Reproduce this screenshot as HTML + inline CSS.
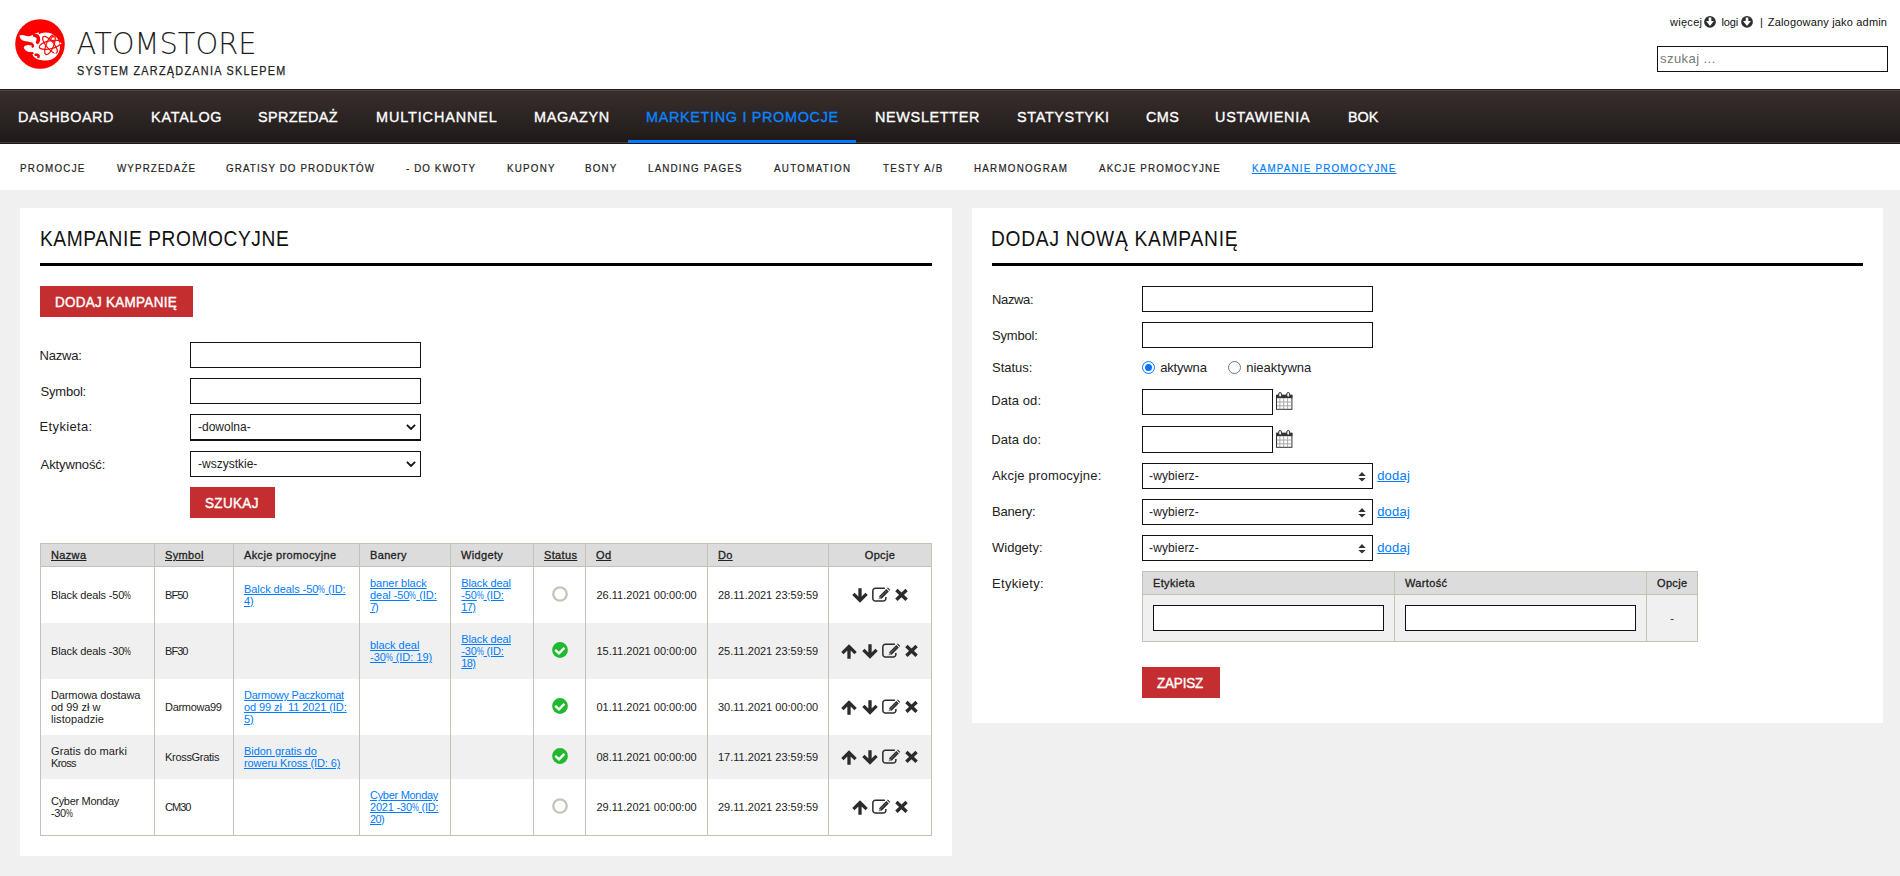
<!DOCTYPE html>
<html lang="pl">
<head>
<meta charset="utf-8">
<title>AtomStore - Kampanie promocyjne</title>
<style>
*{box-sizing:border-box;margin:0;padding:0}
html,body{width:1900px;height:876px;overflow:hidden}
body{background:#f0f0f0;font-family:"Liberation Sans",sans-serif;font-size:12px;color:#222;position:relative}
a{color:#007bff;text-decoration:underline}
.abs{position:absolute}
/* header */
#header{position:absolute;left:0;top:0;width:1900px;height:89px;background:#fff}
#logo-circle{position:absolute;left:14.8px;top:18.5px;width:50px;height:50px}
#brand{position:absolute;left:76px;top:24px;width:182px;height:34px}
#tagline{-webkit-text-stroke:.25px currentColor;transform:scaleX(.9);transform-origin:0 50%;position:absolute;left:77px;top:64px;font-size:12px;letter-spacing:1px;color:#222;white-space:nowrap;line-height:14px}
#toplinks span{position:absolute;top:15px;font-size:11px;line-height:14px;color:#111;white-space:nowrap}
#toplinks i{position:absolute;top:16px;width:12px;height:12px}
#toplinks i svg{display:block}
#tl3{color:#555}
#search{position:absolute;left:1657px;top:46px;width:231px;height:26px;border:1px solid #111;background:#fff;font-size:13px;color:#777;line-height:24px;padding-left:2px}
/* nav */
#nav{position:absolute;left:0;top:89px;width:1900px;height:55px;background:linear-gradient(#392f2d,#1e1a19);border-top:1px solid #241e1d;border-bottom:1px solid #1d1817;box-shadow:inset 0 1px 0 #4b4443,inset 0 -1px 0 #423b3a}
#nav span{-webkit-text-stroke:.35px currentColor;transform:scaleX(.93);transform-origin:0 50%;position:absolute;top:0;height:53px;line-height:53px;font-size:15.5px;color:#fff;white-space:nowrap;letter-spacing:.4px}
#nav span.act{color:#0a84ff}
#nav i{position:absolute;left:628px;top:50px;width:228px;height:3px;background:#007bff}
#subnav{position:absolute;left:0;top:144px;width:1900px;height:46px;background:#fff}
#subnav span{-webkit-text-stroke:.2px currentColor;transform:scaleX(.89);transform-origin:0 50%;position:absolute;top:17px;line-height:14px;font-size:11px;letter-spacing:1px;color:#222;white-space:nowrap}
#subnav span.act{color:#007bff;text-decoration:underline}
/* panels */
.panel{position:absolute;background:#fff}
#left{left:20px;top:208px;width:932px;height:648px}
#right{left:972px;top:208px;width:911px;height:515px}
.panel h1{transform:scaleX(.88);transform-origin:0 50%;position:absolute;left:20px;top:19px;font-size:21.8px;font-weight:normal;color:#111;line-height:24px;letter-spacing:.6px;white-space:nowrap}
.panel .rule{position:absolute;left:20px;right:20px;top:55px;height:3px;background:#000}
.btn{position:absolute;background:#c52e31;height:31px}
.btn span{transform:scaleX(.93);transform-origin:0 50%;position:absolute;top:0;color:#fff;font-size:14.5px;letter-spacing:.6px;line-height:33px;white-space:nowrap;-webkit-text-stroke:.4px #fff}
.lbl{position:absolute;font-size:13px;line-height:16px;color:#222;white-space:nowrap}
.inp{position:absolute;height:26px;border:1px solid #111;background:#fff}
.sel{position:absolute;height:26px;border:1px solid #111;background:#fff;font-size:12px;line-height:24px;padding-left:6px;color:#222}
/* table */
table{border-collapse:separate;border-spacing:0;position:absolute;font-size:11px;line-height:12px;color:#222;table-layout:fixed}
th{background:#dcdcdc;font-weight:normal;-webkit-text-stroke:.3px currentColor;letter-spacing:.35px;text-align:left;padding:0 10px;height:24px;border:1px solid #c3c3b4;border-right:0;font-size:11px;white-space:nowrap}
td{white-space:nowrap;letter-spacing:-.12px;padding:0 10px;border-left:1px solid #c3c3b4;vertical-align:middle}
th:last-child,td:last-child{border-right:1px solid #c3c3b4}
tr:last-child td{border-bottom:1px solid #c3c3b4}
tr.alt td{background:#f0f0f0}
th u{text-decoration:underline}
td.dt{letter-spacing:0}
td.sy{letter-spacing:-.3px}
.pc{display:inline-block;transform:scaleX(.7);transform-origin:0 50%;margin-right:-3px;text-decoration:inherit;letter-spacing:0}
.ops{text-align:center;padding:0;white-space:nowrap;font-size:0}
td.ops{padding:0}
.ic{display:inline-block;vertical-align:middle;margin:0 2.3px;overflow:visible;position:relative;left:-.4px;top:.2px}
.stc{text-align:center;padding:0;font-size:0}
td.stc{padding:0}
.st{display:inline-block;vertical-align:middle;position:relative;top:-1px;left:.5px}
.sel{position:absolute}
.sel svg{position:absolute}
.sel span,#search span{display:inline-block}
.chev{right:4px;top:9px}
.updn{right:6px;top:7px}
.radio{position:absolute;width:13px;height:13px;border-radius:50%;border:1px solid #767676;background:#fff}
.radio.on{border-color:#0075ff}
.radio.on::after{content:"";position:absolute;left:2px;top:2px;width:7px;height:7px;border-radius:50%;background:#0075ff}
.lnk{color:#007bff;text-decoration:underline}
.inp.rel{position:relative;display:block}
.cal{display:block}

#n1{letter-spacing:0.54px!important;margin-left:0.00px!important}
#n2{letter-spacing:0.83px!important;margin-left:0.00px!important}
#n3{letter-spacing:0.40px!important;margin-left:0.00px!important}
#n4{letter-spacing:0.95px!important;margin-left:0.00px!important}
#n5{letter-spacing:0.69px!important;margin-left:0.00px!important}
#n6{letter-spacing:0.72px!important;margin-left:0.00px!important}
#n7{letter-spacing:0.71px!important;margin-left:0.00px!important}
#n8{letter-spacing:0.71px!important;margin-left:0.00px!important}
#n9{letter-spacing:0.40px!important;margin-left:0.00px!important}
#n10{letter-spacing:0.77px!important;margin-left:0.00px!important}
#n11{letter-spacing:-0.10px!important;margin-left:1.00px!important}
#n12{letter-spacing:1.43px!important;margin-left:0.00px!important}
#n13{letter-spacing:1.26px!important;margin-left:1.00px!important}
#n14{letter-spacing:1.25px!important;margin-left:0.00px!important}
#n15{letter-spacing:1.23px!important;margin-left:0.00px!important}
#n16{letter-spacing:1.40px!important;margin-left:0.00px!important}
#n17{letter-spacing:1.35px!important;margin-left:-1.00px!important}
#n18{letter-spacing:1.33px!important;margin-left:0.00px!important}
#n19{letter-spacing:1.45px!important;margin-left:0.00px!important}
#n20{letter-spacing:1.38px!important;margin-left:2.00px!important}
#n21{letter-spacing:1.40px!important;margin-left:0.00px!important}
#n22{letter-spacing:1.30px!important;margin-left:1.00px!important}
#n23{letter-spacing:1.35px!important;margin-left:0.00px!important}
#tagline{letter-spacing:1.44px!important;margin-left:0.40px!important}
#tl4{letter-spacing:0.18px!important;margin-left:0.80px!important}
#h1l{letter-spacing:0.65px!important;margin-left:-0.40px!important}
#h1r{letter-spacing:0.85px!important;margin-left:-1.00px!important}
#b1{letter-spacing:0.29px!important;margin-left:-0.20px!important}
#b2{letter-spacing:0.36px!important;margin-left:-0.20px!important}
#b3{letter-spacing:-0.20px!important;margin-left:1.00px!important}
#tl1{letter-spacing:0.28px!important;margin-left:1.00px!important}
#tl2{letter-spacing:-0.14px!important;margin-left:0.40px!important}
#ll1{letter-spacing:-0.24px!important;margin-left:-0.40px!important}
#ll2{letter-spacing:-0.22px!important;margin-left:0.60px!important}
#ll3{letter-spacing:0.33px!important;margin-left:-0.40px!important}
#ll4{letter-spacing:-0.11px!important;margin-left:0.60px!important}
#lr1{letter-spacing:-0.36px!important;margin-left:0.00px!important}
#lr2{letter-spacing:-0.17px!important;margin-left:0.00px!important}
#lr3{letter-spacing:0.00px!important;margin-left:0.00px!important}
#lr4{letter-spacing:-0.17px!important;margin-left:1.20px!important}
#lr5{letter-spacing:0.00px!important;margin-left:0.20px!important}
#lr6{letter-spacing:0.10px!important;margin-left:-0.80px!important}
#lr7{letter-spacing:0.10px!important;margin-left:-0.80px!important}
#lr8{letter-spacing:0.19px!important;margin-left:0.00px!important}
#lr10{letter-spacing:-0.18px!important;margin-left:0.00px!important}
#lr12{letter-spacing:0.00px!important;margin-left:0.00px!important}
#lr14{letter-spacing:0.31px!important;margin-left:0.00px!important}
#lr9{letter-spacing:0.19px!important;margin-left:-0.80px!important}
#lr11{letter-spacing:0.19px!important;margin-left:-0.80px!important}
#lr13{letter-spacing:0.19px!important;margin-left:-0.80px!important}
#s1{letter-spacing:0.00px!important;margin-left:1.00px!important}
#s2{letter-spacing:0.00px!important;margin-left:1.00px!important}
#s3{letter-spacing:0.13px!important;margin-left:0.00px!important}
#s4{letter-spacing:0.13px!important;margin-left:0.00px!important}
#s5{letter-spacing:0.13px!important;margin-left:0.00px!important}
#sp{letter-spacing:0.44px!important;margin-left:0.00px!important}
#c1{letter-spacing:-0.13px!important;margin-left:0.00px!important}
#c2{letter-spacing:-0.96px!important;margin-left:0.00px!important}
#c3{letter-spacing:-0.06px!important;margin-left:0.00px!important}
#c4{letter-spacing:-0.12px!important;margin-left:0.00px!important}
#c5{letter-spacing:-0.02px!important;margin-left:0.00px!important}
#c6{letter-spacing:-0.04px!important;margin-left:0.00px!important}
#c7{letter-spacing:-1.12px!important;margin-left:0.00px!important}
#c8{letter-spacing:-0.12px!important;margin-left:0.30px!important}
#c9{letter-spacing:-0.12px!important;margin-left:0.30px!important}
#c10{letter-spacing:-0.62px!important;margin-left:0.30px!important}
#c11{letter-spacing:0.00px!important;margin-left:0.50px!important}
#c12{letter-spacing:0.00px!important;margin-left:0.00px!important}
#c13{letter-spacing:-0.13px!important;margin-left:0.00px!important}
#c14{letter-spacing:-0.96px!important;margin-left:0.00px!important}
#c15{letter-spacing:-0.02px!important;margin-left:0.00px!important}
#c16{letter-spacing:-0.02px!important;margin-left:0.00px!important}
#c17{letter-spacing:-0.12px!important;margin-left:0.30px!important}
#c18{letter-spacing:-0.12px!important;margin-left:0.30px!important}
#c19{letter-spacing:-0.62px!important;margin-left:0.30px!important}
#c20{letter-spacing:0.00px!important;margin-left:0.50px!important}
#c21{letter-spacing:0.00px!important;margin-left:0.00px!important}
#c22{letter-spacing:-0.12px!important;margin-left:0.00px!important}
#c23{letter-spacing:-0.02px!important;margin-left:0.00px!important}
#c24{letter-spacing:0.10px!important;margin-left:0.00px!important}
#c25{letter-spacing:-0.30px!important;margin-left:0.00px!important}
#c26{letter-spacing:-0.24px!important;margin-left:0.00px!important}
#c27{letter-spacing:-0.08px!important;margin-left:0.00px!important}
#c28{letter-spacing:-0.12px!important;margin-left:0.00px!important}
#c29{letter-spacing:0.00px!important;margin-left:0.50px!important}
#c30{letter-spacing:0.00px!important;margin-left:0.00px!important}
#c31{letter-spacing:0.09px!important;margin-left:0.00px!important}
#c32{letter-spacing:-0.63px!important;margin-left:0.00px!important}
#c33{letter-spacing:-0.30px!important;margin-left:0.00px!important}
#c34{letter-spacing:-0.04px!important;margin-left:0.00px!important}
#c35{letter-spacing:-0.11px!important;margin-left:0.00px!important}
#c36{letter-spacing:0.00px!important;margin-left:0.50px!important}
#c37{letter-spacing:0.00px!important;margin-left:0.00px!important}
#c38{letter-spacing:-0.30px!important;margin-left:0.00px!important}
#c39{letter-spacing:-0.45px!important;margin-left:0.00px!important}
#c40{letter-spacing:-0.98px!important;margin-left:0.00px!important}
#c41{letter-spacing:-0.29px!important;margin-left:0.00px!important}
#c42{letter-spacing:-0.20px!important;margin-left:0.00px!important}
#c43{letter-spacing:-0.62px!important;margin-left:0.00px!important}
#c44{letter-spacing:0.00px!important;margin-left:0.50px!important}
#c45{letter-spacing:0.00px!important;margin-left:0.00px!important}
</style>
</head>
<body>
<div id="header">
  <svg id="logo-circle" viewBox="0 0 50 50">
    <circle cx="25" cy="25" r="24.8" fill="#fe0000"/>
    <circle cx="31" cy="27.6" r="14" fill="#fff"/>
    <path fill="#fff" d="M4.4 16.6C7.5 14.6 11 18 15 17C18 16.2 19.5 13.8 24 13.4L23 24.5C18 24 13.5 22.2 9.2 21.9C6.6 21.6 4.8 19.6 4.4 16.6Z"/>
    <path fill="#fff" d="M8.8 28C10.8 25.4 15 26.6 20.5 24.8L21.5 33.4C17 33.3 13 33.2 11.3 31.7C9.8 30.6 8.8 29.6 8.8 28Z"/>
    <path fill="#fff" d="M17.6 35.3C19.4 33.8 22 35.2 24.4 33.8L29 41.4C24.5 41.3 20.2 39.8 18.6 37.6C17.9 36.7 17.5 36.1 17.6 35.3Z"/>
    <path fill="none" stroke="#fe0000" stroke-width="3.6" stroke-linecap="round" d="M19.6 16.2C23.4 16.6 24.4 19.8 22.6 23.2"/>
    <path fill="none" stroke="#fe0000" stroke-width="2.4" stroke-linecap="round" d="M15.2 25.2C17.6 24.8 18.6 26.4 17.6 27.6"/>
    <path fill="none" stroke="#fe0000" stroke-width="2.6" stroke-linecap="round" d="M20.6 35.8C23 35.4 24.2 36.6 23.4 38"/>
    <g fill="none" stroke="#fe0000" stroke-width="1.15">
      <ellipse cx="35" cy="25.8" rx="11" ry="4" transform="rotate(-12 35 25.8)"/>
      <ellipse cx="35" cy="25.8" rx="10.5" ry="3.8" transform="rotate(50 35 25.8)"/>
      <ellipse cx="35" cy="25.8" rx="10.5" ry="3.8" transform="rotate(-68 35 25.8)"/>
      <path d="M39.6 18.2A2.3 2.3 0 1 0 40 21.6"/>
    </g>
    <circle cx="40" cy="33.8" r=".9" fill="#fff"/>
    <circle cx="45.6" cy="24.4" r=".8" fill="#fff"/>
  </svg>
  <svg id="brand" viewBox="0 0 182 34"><text x="0.6" y="29.6" font-family="DejaVu Sans, Liberation Sans, sans-serif" font-weight="200" font-size="30" fill="#1d1d1d" textLength="180" lengthAdjust="spacingAndGlyphs">ATOMSTORE</text></svg>
  <div id="tagline">SYSTEM ZARZĄDZANIA SKLEPEM</div>
  <div id="toplinks"><span id="tl1" style="left:1669px">więcej</span><i style="left:1704px"><svg class="circ" width="12" height="12" viewBox="0 0 12 12"><circle cx="6" cy="5.9" r="5.9" fill="#2e2e2e"/><path d="M4.7 1.6h2.6v3.5h2.6L6 9.9 2.1 5.1h2.6z" fill="#fff"/></svg></i><span id="tl2" style="left:1721px">logi</span><i style="left:1741px"><svg class="circ" width="12" height="12" viewBox="0 0 12 12"><circle cx="6" cy="5.9" r="5.9" fill="#2e2e2e"/><path d="M4.7 1.6h2.6v3.5h2.6L6 9.9 2.1 5.1h2.6z" fill="#fff"/></svg></i><span id="tl3" style="left:1760px">|</span><span id="tl4" style="left:1767px">Zalogowany jako admin</span></div>
  <div id="search"><span id="sp">szukaj ...</span></div>
</div>
<div id="nav">
  <span id="n1" style="left:18px">DASHBOARD</span>
  <span id="n2" style="left:151px">KATALOG</span>
  <span id="n3" style="left:258px">SPRZEDAŻ</span>
  <span id="n4" style="left:376px">MULTICHANNEL</span>
  <span id="n5" style="left:534px">MAGAZYN</span>
  <span id="n6" style="left:646px" class="act">MARKETING I PROMOCJE</span>
  <span id="n7" style="left:875px">NEWSLETTER</span>
  <span id="n8" style="left:1017px">STATYSTYKI</span>
  <span id="n9" style="left:1146px">CMS</span>
  <span id="n10" style="left:1215px">USTAWIENIA</span>
  <span id="n11" style="left:1347px">BOK</span>
  <i></i>
</div>
<div id="subnav">
  <span id="n12" style="left:20px">PROMOCJE</span>
  <span id="n13" style="left:116px">WYPRZEDAŻE</span>
  <span id="n14" style="left:226px">GRATISY DO PRODUKTÓW</span>
  <span id="n15" style="left:406px">- DO KWOTY</span>
  <span id="n16" style="left:507px">KUPONY</span>
  <span id="n17" style="left:586px">BONY</span>
  <span id="n18" style="left:648px">LANDING PAGES</span>
  <span id="n19" style="left:774px">AUTOMATION</span>
  <span id="n20" style="left:881px">TESTY A/B</span>
  <span id="n21" style="left:974px">HARMONOGRAM</span>
  <span id="n22" style="left:1098px">AKCJE PROMOCYJNE</span>
  <span id="n23" style="left:1252px" class="act">KAMPANIE PROMOCYJNE</span>
</div>

<div id="left" class="panel">
  <h1 id="h1l">KAMPANIE PROMOCYJNE</h1>
  <div class="rule"></div>
  <div class="btn" style="left:20px;top:78px;width:153px"><span id="b1" style="left:15px">DODAJ KAMPANIĘ</span></div>

  <div class="lbl" id="ll1" style="left:20px;top:140px">Nazwa:</div>
  <div class="inp" style="left:170px;top:134px;width:231px"></div>
  <div class="lbl" id="ll2" style="left:20px;top:176px">Symbol:</div>
  <div class="inp" style="left:170px;top:170px;width:231px"></div>
  <div class="lbl" id="ll3" style="left:20px;top:211px">Etykieta:</div>
  <div class="sel" style="left:170px;top:206px;width:231px;height:27px;border-bottom-width:2px"><span id="s1">-dowolna-</span><svg class="chev" width="10" height="6" viewBox="0 0 10 6"><path d="M0.9 0.9L5 5L9.1 0.9" fill="none" stroke="#111" stroke-width="1.8"/></svg></div>
  <div class="lbl" id="ll4" style="left:20px;top:249px">Aktywność:</div>
  <div class="sel" style="left:170px;top:243px;width:231px"><span id="s2">-wszystkie-</span><svg class="chev" width="10" height="6" viewBox="0 0 10 6"><path d="M0.9 0.9L5 5L9.1 0.9" fill="none" stroke="#111" stroke-width="1.8"/></svg></div>
  <div class="btn" style="left:170px;top:279px;width:85px"><span id="b2" style="left:15px">SZUKAJ</span></div>

  <table id="t1" style="left:20px;top:335px;width:892px">
    <colgroup><col style="width:114px"><col style="width:79px"><col style="width:126px"><col style="width:91px"><col style="width:83px"><col style="width:52px"><col style="width:122px"><col style="width:121px"><col style="width:104px"></colgroup>
    <tr><th><u>Nazwa</u></th><th><u>Symbol</u></th><th>Akcje promocyjne</th><th>Banery</th><th>Widgety</th><th><u>Status</u></th><th><u>Od</u></th><th><u>Do</u></th><th style="text-align:center">Opcje</th></tr>
    <tr style="height:56px"><td><span id="c1">Black deals -50<span class="pc">%</span></span></td><td class="sy"><span id="c2">BF50</span></td><td><a><span id="c3">Balck deals -50<span class="pc">%</span> (ID:</span><br><span id="c4">4)</span></a></td><td><a><span id="c5">baner black</span><br><span id="c6">deal -50<span class="pc">%</span> (ID:</span><br><span id="c7">7)</span></a></td><td><a><span id="c8">Black deal</span><br><span id="c9">-50<span class="pc">%</span> (ID:</span><br><span id="c10">17)</span></a></td><td class="stc"><svg class="st" width="16" height="16" viewBox="0 0 16 16"><circle cx="8" cy="8" r="6.7" fill="#fff" stroke="#c9c3b6" stroke-width="2.3"/></svg></td><td class="dt"><span id="c11">26.11.2021 00:00:00</span></td><td class="dt"><span id="c12">28.11.2021 23:59:59</span></td><td class="ops"><svg class="ic" width="16" height="15" viewBox="0 0 16 15"><path d="M8 0.2V12M1.4 5.8L8 12.4L14.6 5.8" fill="none" stroke="#2b2b2b" stroke-width="3.3"/></svg><svg class="ic" width="18" height="15" viewBox="0 0 18 15"><path d="M12.9 0.35H3.35A2.5 2.5 0 0 0 0.85 2.85V10.55A2.5 2.5 0 0 0 3.35 13.05H11.35A2.5 2.5 0 0 0 13.85 10.55V9.1" fill="none" stroke="#2b2b2b" stroke-width="1.5"/><path d="M6.7 11.2L7.4 7.9L14.3 1L16.8 3.5L9.9 10.4Z" fill="#2b2b2b"/><path d="M15 0.3L15.8 -0.5L18.3 2L17.5 2.8Z" fill="#2b2b2b"/><path d="M8.3 9.2L14.6 2.9" stroke="#ddd" stroke-width=".7" stroke-dasharray="1 .8"/><circle cx="7.9" cy="10" r=".7" fill="#fff"/></svg><svg class="ic" width="13" height="15" viewBox="0 0 13 15"><path d="M1.4 2L11.6 11.8M11.6 2L1.4 11.8" fill="none" stroke="#2b2b2b" stroke-width="3.4"/></svg></td></tr>
    <tr style="height:56px" class="alt"><td><span id="c13">Black deals -30<span class="pc">%</span></span></td><td class="sy"><span id="c14">BF30</span></td><td></td><td><a><span id="c15">black deal</span><br><span id="c16">-30<span class="pc">%</span> (ID: 19)</span></a></td><td><a><span id="c17">Black deal</span><br><span id="c18">-30<span class="pc">%</span> (ID:</span><br><span id="c19">18)</span></a></td><td class="stc"><svg class="st" width="16" height="16" viewBox="0 0 16 16"><circle cx="8" cy="8" r="7.9" fill="#1fb82f"/><path d="M3.2 7.8L7 11.4L12.4 5.8" fill="none" stroke="#fff" stroke-width="2.4"/></svg></td><td class="dt"><span id="c20">15.11.2021 00:00:00</span></td><td class="dt"><span id="c21">25.11.2021 23:59:59</span></td><td class="ops"><svg class="ic" width="16" height="15" viewBox="0 0 16 15"><path d="M8 14.8V3M1.4 9.2L8 2.6L14.6 9.2" fill="none" stroke="#2b2b2b" stroke-width="3.3"/></svg><svg class="ic" width="16" height="15" viewBox="0 0 16 15"><path d="M8 0.2V12M1.4 5.8L8 12.4L14.6 5.8" fill="none" stroke="#2b2b2b" stroke-width="3.3"/></svg><svg class="ic" width="18" height="15" viewBox="0 0 18 15"><path d="M12.9 0.35H3.35A2.5 2.5 0 0 0 0.85 2.85V10.55A2.5 2.5 0 0 0 3.35 13.05H11.35A2.5 2.5 0 0 0 13.85 10.55V9.1" fill="none" stroke="#2b2b2b" stroke-width="1.5"/><path d="M6.7 11.2L7.4 7.9L14.3 1L16.8 3.5L9.9 10.4Z" fill="#2b2b2b"/><path d="M15 0.3L15.8 -0.5L18.3 2L17.5 2.8Z" fill="#2b2b2b"/><path d="M8.3 9.2L14.6 2.9" stroke="#ddd" stroke-width=".7" stroke-dasharray="1 .8"/><circle cx="7.9" cy="10" r=".7" fill="#fff"/></svg><svg class="ic" width="13" height="15" viewBox="0 0 13 15"><path d="M1.4 2L11.6 11.8M11.6 2L1.4 11.8" fill="none" stroke="#2b2b2b" stroke-width="3.4"/></svg></td></tr>
    <tr style="height:56px"><td><span id="c22">Darmowa dostawa</span><br><span id="c23">od 99 zł w</span><br><span id="c24">listopadzie</span></td><td class="sy"><span id="c25">Darmowa99</span></td><td><a><span id="c26">Darmowy Paczkomat</span><br><span id="c27">od 99 zł_11 2021 (ID:</span><br><span id="c28">5)</span></a></td><td></td><td></td><td class="stc"><svg class="st" width="16" height="16" viewBox="0 0 16 16"><circle cx="8" cy="8" r="7.9" fill="#1fb82f"/><path d="M3.2 7.8L7 11.4L12.4 5.8" fill="none" stroke="#fff" stroke-width="2.4"/></svg></td><td class="dt"><span id="c29">01.11.2021 00:00:00</span></td><td class="dt"><span id="c30">30.11.2021 00:00:00</span></td><td class="ops"><svg class="ic" width="16" height="15" viewBox="0 0 16 15"><path d="M8 14.8V3M1.4 9.2L8 2.6L14.6 9.2" fill="none" stroke="#2b2b2b" stroke-width="3.3"/></svg><svg class="ic" width="16" height="15" viewBox="0 0 16 15"><path d="M8 0.2V12M1.4 5.8L8 12.4L14.6 5.8" fill="none" stroke="#2b2b2b" stroke-width="3.3"/></svg><svg class="ic" width="18" height="15" viewBox="0 0 18 15"><path d="M12.9 0.35H3.35A2.5 2.5 0 0 0 0.85 2.85V10.55A2.5 2.5 0 0 0 3.35 13.05H11.35A2.5 2.5 0 0 0 13.85 10.55V9.1" fill="none" stroke="#2b2b2b" stroke-width="1.5"/><path d="M6.7 11.2L7.4 7.9L14.3 1L16.8 3.5L9.9 10.4Z" fill="#2b2b2b"/><path d="M15 0.3L15.8 -0.5L18.3 2L17.5 2.8Z" fill="#2b2b2b"/><path d="M8.3 9.2L14.6 2.9" stroke="#ddd" stroke-width=".7" stroke-dasharray="1 .8"/><circle cx="7.9" cy="10" r=".7" fill="#fff"/></svg><svg class="ic" width="13" height="15" viewBox="0 0 13 15"><path d="M1.4 2L11.6 11.8M11.6 2L1.4 11.8" fill="none" stroke="#2b2b2b" stroke-width="3.4"/></svg></td></tr>
    <tr style="height:44px" class="alt"><td><span id="c31">Gratis do marki</span><br><span id="c32">Kross</span></td><td class="sy"><span id="c33">KrossGratis</span></td><td><a><span id="c34">Bidon gratis do</span><br><span id="c35">roweru Kross (ID: 6)</span></a></td><td></td><td></td><td class="stc"><svg class="st" width="16" height="16" viewBox="0 0 16 16"><circle cx="8" cy="8" r="7.9" fill="#1fb82f"/><path d="M3.2 7.8L7 11.4L12.4 5.8" fill="none" stroke="#fff" stroke-width="2.4"/></svg></td><td class="dt"><span id="c36">08.11.2021 00:00:00</span></td><td class="dt"><span id="c37">17.11.2021 23:59:59</span></td><td class="ops"><svg class="ic" width="16" height="15" viewBox="0 0 16 15"><path d="M8 14.8V3M1.4 9.2L8 2.6L14.6 9.2" fill="none" stroke="#2b2b2b" stroke-width="3.3"/></svg><svg class="ic" width="16" height="15" viewBox="0 0 16 15"><path d="M8 0.2V12M1.4 5.8L8 12.4L14.6 5.8" fill="none" stroke="#2b2b2b" stroke-width="3.3"/></svg><svg class="ic" width="18" height="15" viewBox="0 0 18 15"><path d="M12.9 0.35H3.35A2.5 2.5 0 0 0 0.85 2.85V10.55A2.5 2.5 0 0 0 3.35 13.05H11.35A2.5 2.5 0 0 0 13.85 10.55V9.1" fill="none" stroke="#2b2b2b" stroke-width="1.5"/><path d="M6.7 11.2L7.4 7.9L14.3 1L16.8 3.5L9.9 10.4Z" fill="#2b2b2b"/><path d="M15 0.3L15.8 -0.5L18.3 2L17.5 2.8Z" fill="#2b2b2b"/><path d="M8.3 9.2L14.6 2.9" stroke="#ddd" stroke-width=".7" stroke-dasharray="1 .8"/><circle cx="7.9" cy="10" r=".7" fill="#fff"/></svg><svg class="ic" width="13" height="15" viewBox="0 0 13 15"><path d="M1.4 2L11.6 11.8M11.6 2L1.4 11.8" fill="none" stroke="#2b2b2b" stroke-width="3.4"/></svg></td></tr>
    <tr style="height:57px"><td><span id="c38">Cyber Monday</span><br><span id="c39">-30<span class="pc">%</span></span></td><td class="sy"><span id="c40">CM30</span></td><td></td><td><a><span id="c41">Cyber Monday</span><br><span id="c42">2021 -30<span class="pc">%</span> (ID:</span><br><span id="c43">20)</span></a></td><td></td><td class="stc"><svg class="st" width="16" height="16" viewBox="0 0 16 16"><circle cx="8" cy="8" r="6.7" fill="#fff" stroke="#c9c3b6" stroke-width="2.3"/></svg></td><td class="dt"><span id="c44">29.11.2021 00:00:00</span></td><td class="dt"><span id="c45">29.11.2021 23:59:59</span></td><td class="ops"><svg class="ic" width="16" height="15" viewBox="0 0 16 15"><path d="M8 14.8V3M1.4 9.2L8 2.6L14.6 9.2" fill="none" stroke="#2b2b2b" stroke-width="3.3"/></svg><svg class="ic" width="18" height="15" viewBox="0 0 18 15"><path d="M12.9 0.35H3.35A2.5 2.5 0 0 0 0.85 2.85V10.55A2.5 2.5 0 0 0 3.35 13.05H11.35A2.5 2.5 0 0 0 13.85 10.55V9.1" fill="none" stroke="#2b2b2b" stroke-width="1.5"/><path d="M6.7 11.2L7.4 7.9L14.3 1L16.8 3.5L9.9 10.4Z" fill="#2b2b2b"/><path d="M15 0.3L15.8 -0.5L18.3 2L17.5 2.8Z" fill="#2b2b2b"/><path d="M8.3 9.2L14.6 2.9" stroke="#ddd" stroke-width=".7" stroke-dasharray="1 .8"/><circle cx="7.9" cy="10" r=".7" fill="#fff"/></svg><svg class="ic" width="13" height="15" viewBox="0 0 13 15"><path d="M1.4 2L11.6 11.8M11.6 2L1.4 11.8" fill="none" stroke="#2b2b2b" stroke-width="3.4"/></svg></td></tr>
  </table>
</div>
<div id="right" class="panel">
  <h1 id="h1r">DODAJ NOWĄ KAMPANIĘ</h1>
  <div class="rule"></div>

  <div class="lbl" id="lr1" style="left:20px;top:84px">Nazwa:</div>
  <div class="inp" style="left:170px;top:78px;width:231px"></div>
  <div class="lbl" id="lr2" style="left:20px;top:120px">Symbol:</div>
  <div class="inp" style="left:170px;top:114px;width:231px"></div>
  <div class="lbl" id="lr3" style="left:20px;top:152px">Status:</div>
  <div class="radio on" style="left:170px;top:153px"></div>
  <div class="lbl" id="lr4" style="left:187px;top:152px">aktywna</div>
  <div class="radio" style="left:256px;top:153px"></div>
  <div class="lbl" id="lr5" style="left:274px;top:152px">nieaktywna</div>
  <div class="lbl" id="lr6" style="left:20px;top:185px">Data od:</div>
  <div class="inp" style="left:170px;top:181px;width:131px"></div>
  <div class="abs" style="left:304px;top:183.5px"><svg class="cal" width="17" height="18" viewBox="0 0 17 18"><rect x="0.5" y="3.3" width="15.4" height="14" fill="#fff" stroke="#333"/><rect x="0" y="2.8" width="16.4" height="3.4" fill="#333"/><path d="M1 10H15.5M1 13.8H15.5M3.9 6.2V17M7.7 6.2V17M11.6 6.2V17" stroke="#a8a8a8" stroke-width="1" fill="none"/><rect x="2.7" y="0.5" width="2.8" height="4.6" rx="1.4" fill="#eee" stroke="#333"/><rect x="10.8" y="0.5" width="2.8" height="4.6" rx="1.4" fill="#eee" stroke="#333"/></svg></div>
  <div class="lbl" id="lr7" style="left:20px;top:224px">Data do:</div>
  <div class="inp" style="left:170px;top:218px;width:131px;height:27px"></div>
  <div class="abs" style="left:304px;top:222px"><svg class="cal" width="17" height="18" viewBox="0 0 17 18"><rect x="0.5" y="3.3" width="15.4" height="14" fill="#fff" stroke="#333"/><rect x="0" y="2.8" width="16.4" height="3.4" fill="#333"/><path d="M1 10H15.5M1 13.8H15.5M3.9 6.2V17M7.7 6.2V17M11.6 6.2V17" stroke="#a8a8a8" stroke-width="1" fill="none"/><rect x="2.7" y="0.5" width="2.8" height="4.6" rx="1.4" fill="#eee" stroke="#333"/><rect x="10.8" y="0.5" width="2.8" height="4.6" rx="1.4" fill="#eee" stroke="#333"/></svg></div>
  <div class="lbl" id="lr8" style="left:20px;top:260px">Akcje promocyjne:</div>
  <div class="sel" style="left:170px;top:255px;width:231px"><span id="s3">-wybierz-</span><svg class="updn" width="8" height="12" viewBox="0 0 8 12"><path d="M0.3 5L4 1L7.7 5ZM0.3 7L4 10.6L7.7 7Z" fill="#333"/></svg></div>
  <a class="lbl lnk" id="lr9" style="left:406px;top:260px">dodaj</a>
  <div class="lbl" id="lr10" style="left:20px;top:296px">Banery:</div>
  <div class="sel" style="left:170px;top:291px;width:231px"><span id="s4">-wybierz-</span><svg class="updn" width="8" height="12" viewBox="0 0 8 12"><path d="M0.3 5L4 1L7.7 5ZM0.3 7L4 10.6L7.7 7Z" fill="#333"/></svg></div>
  <a class="lbl lnk" id="lr11" style="left:406px;top:296px">dodaj</a>
  <div class="lbl" id="lr12" style="left:20px;top:332px">Widgety:</div>
  <div class="sel" style="left:170px;top:327px;width:231px"><span id="s5">-wybierz-</span><svg class="updn" width="8" height="12" viewBox="0 0 8 12"><path d="M0.3 5L4 1L7.7 5ZM0.3 7L4 10.6L7.7 7Z" fill="#333"/></svg></div>
  <a class="lbl lnk" id="lr13" style="left:406px;top:332px">dodaj</a>
  <div class="lbl" id="lr14" style="left:20px;top:368px">Etykiety:</div>

  <table id="t2" style="left:170px;top:363px;width:556px">
    <colgroup><col style="width:252px"><col style="width:252px"><col style="width:52px"></colgroup>
    <tr><th>Etykieta</th><th>Wartość</th><th style="text-align:center">Opcje</th></tr>
    <tr style="height:47px" class="alt"><td><div class="inp rel" style="width:231px"></div></td><td><div class="inp rel" style="width:231px"></div></td><td style="text-align:center">-</td></tr>
  </table>
  <div class="btn" style="left:170px;top:459px;width:78px"><span id="b3" style="left:14px">ZAPISZ</span></div>
</div>

</body>
</html>
